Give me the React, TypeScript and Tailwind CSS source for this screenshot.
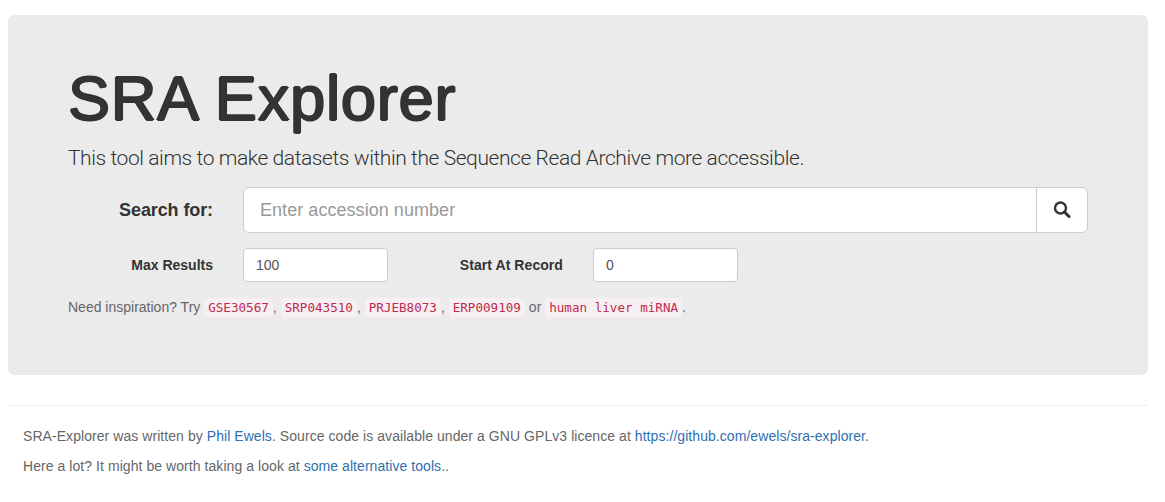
const sans = "font-['Liberation_Sans',Arial,sans-serif]";

function Sample({ children }: { children: React.ReactNode }) {
  return (
    <code className="rounded-[4px] bg-[#f7f0f2] px-[4px] py-[2px] font-['DejaVu_Sans_Mono',monospace] text-[12.6px] text-[#bf2a4e]">
      {children}
    </code>
  );
}

export default function App() {
  return (
    <div className={`${sans} min-h-[502px] bg-white px-2 pt-[15px] text-[14px] leading-[20px] text-[#333]`}>
      {/* jumbotron */}
      <div className="h-[360px] w-[1140px] rounded-[6px] bg-[#ebebeb] pl-[60px] pr-[60px] pt-[49px]">
        <h1 className="text-[63px] font-medium leading-[69px] tracking-[0.85px] text-[#333] [text-shadow:1.1px_0_#333,-1.1px_0_#333,0_0.7px_#333,0_-0.7px_#333]">
          SRA Explorer
        </h1>
        <p className="mt-[10px] font-['Roboto',sans-serif] text-[21px] font-light leading-[30px] tracking-[-0.42px] text-[#333]">
          This tool aims to make datasets within the Sequence Read Archive more accessible.
        </p>

        <div className="mt-[14px] flex h-[46px] items-center">
          <label className="w-[145px] text-right text-[18px] font-bold tracking-[-0.1px]">Search for:</label>
          <div className="ml-[30px] flex h-[46px] w-[845px]">
            <input
              type="text"
              placeholder="Enter accession number"
              className="h-full w-[794px] rounded-l-[6px] border border-[#ccc] bg-white px-4 text-[18px] tracking-[0.05px] text-[#555] outline-none placeholder:text-[#999]"
            />
            <button
              type="button"
              className="-ml-px flex h-full w-[52px] items-center justify-center rounded-r-[6px] border border-[#ccc] bg-white text-[#333]"
            >
              <svg width="18" height="18" viewBox="0 0 18 18" fill="none" stroke="currentColor">
                <circle cx="7.5" cy="7" r="5.5" strokeWidth="2.4" />
                <path d="M11.5 11 L16 15.5" strokeWidth="3" strokeLinecap="round" />
              </svg>
            </button>
          </div>
        </div>

        <div className="mt-[15px] flex h-[34px] items-center">
          <label className="w-[145px] text-right font-bold">Max Results</label>
          <input
            type="text"
            defaultValue="100"
            className="ml-[30px] h-[34px] w-[145px] rounded-[4px] border border-[#ccc] bg-white px-3 text-[#555] outline-none"
          />
          <label className="w-[175px] text-right font-bold tracking-[0.07px]">Start At Record</label>
          <input
            type="text"
            defaultValue="0"
            className="ml-[30px] h-[34px] w-[145px] rounded-[4px] border border-[#ccc] bg-white px-3 text-[#555] outline-none"
          />
        </div>

        <p className="mt-[15px] text-[#666]">
          Need inspiration? Try <Sample>GSE30567</Sample>, <Sample>SRP043510</Sample>, <Sample>PRJEB8073</Sample>,{" "}
          <Sample>ERP009109</Sample> or <Sample>human liver miRNA</Sample>.
        </p>
      </div>

      {/* footer */}
      <div className="mt-[30px] w-[1140px] border-t border-[#eee] px-[15px] pt-[20px] tracking-[0.06px] text-[#666]">
        <p>
          SRA-Explorer was written by <a className="text-[#2f6fb3]">Phil Ewels</a>. Source code is available under a GNU
          GPLv3 licence at <a className="text-[#2f6fb3]">https://github.com/ewels/sra-explorer</a>.
        </p>
        <p className="mt-[10px]">
          Here a lot? It might be worth taking a look at <a className="text-[#2f6fb3]">some alternative tools.</a>.
        </p>
      </div>
    </div>
  );
}
